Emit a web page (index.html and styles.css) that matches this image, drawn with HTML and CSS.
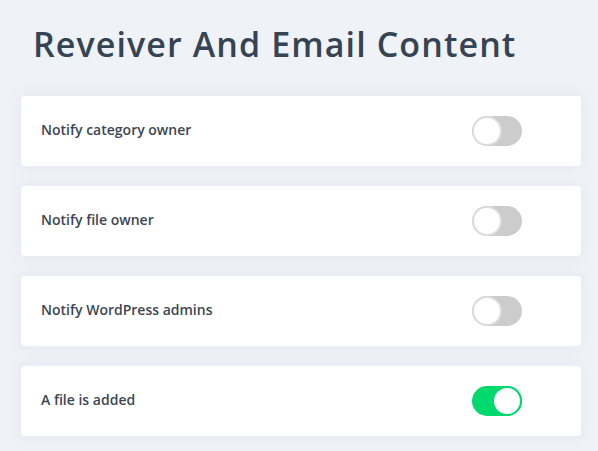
FILE: index.html
```
<!DOCTYPE html>
<html>
<head>
<meta charset="utf-8">
<link rel="stylesheet" href="styles.css">
</head>
<body>
<div class="page">
  <h1 class="title">Reveiver And Email Content</h1>
  <div class="list">
    <div class="card"><span class="label">Notify category owner</span><span class="toggle"><span class="knob"></span></span></div>
    <div class="card"><span class="label">Notify file owner</span><span class="toggle"><span class="knob"></span></span></div>
    <div class="card"><span class="label">Notify WordPress admins</span><span class="toggle"><span class="knob"></span></span></div>
    <div class="card"><span class="label">A file is added</span><span class="toggle on"><span class="knob"></span></span></div>
  </div>
</div>
</body>
</html>
```
FILE: styles.css
```
html, body { margin: 0; padding: 0; }
body {
  background: #eff2f7;
  font-family: "Open Sans", "Lato", sans-serif;
  width: 598px;
  height: 451px;
  overflow: hidden;
}
.page {
  padding: 0 17px 0 21px;
}
.title {
  margin: 0;
  padding: 24px 0 0 12px;
  height: 96px;
  box-sizing: border-box;
  font-size: 34px;
  font-weight: 600;
  color: #354352;
  letter-spacing: 1.1px;
  line-height: 40px;
}
.list {
  display: flex;
  flex-direction: column;
  gap: 20px;
}
.card {
  height: 70px;
  background: #fff;
  border-radius: 4px;
  box-shadow: 0 0 14px rgba(200, 210, 225, 0.35);
  display: flex;
  align-items: center;
  justify-content: space-between;
  padding: 0 59px 0 20px;
}
.label {
  font-size: 14px;
  font-weight: 600;
  color: #3d4653;
  padding-bottom: 3px;
}
.toggle {
  width: 50px;
  height: 30px;
  border-radius: 15px;
  background: #cccccc;
  display: flex;
  align-items: center;
  box-sizing: border-box;
}
.knob {
  width: 30px;
  height: 30px;
  border-radius: 50%;
  background: #fff;
  border: 2px solid #dcdcdc;
  box-sizing: border-box;
}
.toggle.on {
  background: #00d96e;
  justify-content: flex-end;
}
.toggle.on .knob {
  border-color: #00d96e;
}
```
